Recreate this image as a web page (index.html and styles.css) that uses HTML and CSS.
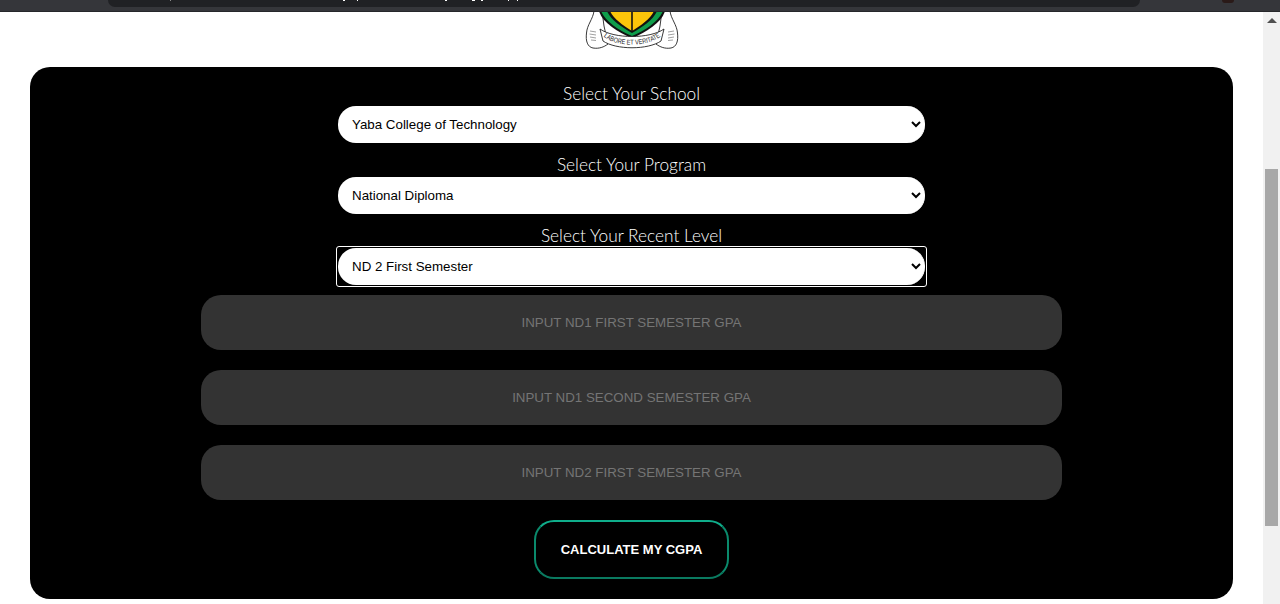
FILE: index.html
```html
<!DOCTYPE html>
<html lang="en">
<head>
<meta charset="utf-8">
<title>CGPA Calculator</title>
<link rel="stylesheet" href="styles.css">
</head>
<body>
<header class="chrome">
  <div class="omnibox"></div>
  <div class="avatar"></div>
</header>
<div class="viewport">
  <main class="page">
    <div class="crest-wrap">
      <svg class="crest" width="100" height="55" viewBox="0 0 100 55" aria-hidden="true">
        <path d="M12 -1 C11 7 5 13 4.500 21 C3.500 29 5.500 35 11 36 C17 37 22 35 26 32 L22 14 L20 -1 Z" fill="#fff" stroke="#222" stroke-width=".9"/>
        <path d="M88 -1 C89 7 95 13 95.500 21 C96.500 29 94.500 35 89 36 C83 37 78 35 74 32 L78 14 L80 -1 Z" fill="#fff" stroke="#222" stroke-width=".9"/>
        <path d="M8 19 L14 20 M7.500 22 L14 23 M8 25 L14 26 M9 28 L14 28.500 M92 19 L86 20 M92.500 22 L86 23 M92 25 L86 26 M91 28 L86 28.500" stroke="#777" stroke-width=".7"/>
        <path d="M17 -1 H83 C80 10 65 20 50 26 C35 20 20 10 17 -1 Z" fill="#111"/>
        <path d="M19 -1 H81 C77 9 64 18 50 24 C36 18 23 9 19 -1 Z" fill="#0f9d4b"/>
        <path d="M25 -1 H75 C72 7 61 15 50 21 C39 15 28 7 25 -1 Z" fill="#111"/>
        <path d="M28 -1 H72 C69 6 60 13 50 19 C40 13 31 6 28 -1 Z" fill="#fcc50a"/>
        <path d="M49.200 -1 H50.800 V20 H49.200 Z" fill="#111"/>
        <path d="M18 17 C32 27 68 27 82 17 L79 29 C66 38 34 38 21 29 Z" fill="#fff" stroke="#222" stroke-width=".9"/>
        <path id="motto" d="M21 24 C34 35.500 66 35.500 79 24" fill="none"/>
        <text class="motto" textLength="60" lengthAdjust="spacingAndGlyphs"><textPath href="#motto" startOffset="50%" text-anchor="middle">LABORE ET VERITATE</textPath></text>
      </svg>
    </div>
    <section class="card">
      <form class="form">
        <div class="field">
          <label class="field-label" for="school">Select Your School</label>
          <select class="picker" id="school"><option>Yaba College of Technology</option></select>
        </div>
        <div class="field">
          <label class="field-label" for="program">Select Your Program</label>
          <select class="picker" id="program"><option>National Diploma</option></select>
        </div>
        <div class="field">
          <label class="field-label" for="level">Select Your Recent Level</label>
          <div class="focus-ring">
            <select class="picker" id="level"><option>ND 2 First Semester</option></select>
          </div>
        </div>
        <div class="inputs">
          <input class="gpa" type="text" placeholder="INPUT ND1 FIRST SEMESTER GPA">
          <input class="gpa" type="text" placeholder="INPUT ND1 SECOND SEMESTER GPA">
          <input class="gpa" type="text" placeholder="INPUT ND2 FIRST SEMESTER GPA">
        </div>
        <button class="calc" type="button">CALCULATE MY CGPA</button>
      </form>
    </section>
  </main>
  <aside class="scrollbar">
    <div class="arrow"></div>
    <div class="thumb"></div>
  </aside>
</div>
</body>
</html>
```
FILE: styles.css
```css
* { box-sizing: border-box; }
html, body { height: 100%; margin: 0; }
body {
  overflow: hidden;
  display: flex;
  flex-direction: column;
  background: #fff;
  font-family: "Liberation Sans", Arial, sans-serif;
}
.chrome {
  flex: 0 0 12px;
  display: flex;
  padding-left: 108px;
  background: #35363a;
  border-bottom: 1px solid #26272a;
}
.omnibox {
  width: 1032px;
  height: 7px;
  border-radius: 0 0 10px 10px;
  background-color: #202124;
  background-image:
    linear-gradient(#8a8a8a, #8a8a8a), linear-gradient(#fff, #fff), linear-gradient(#fff, #fff),
    linear-gradient(#fff, #fff), linear-gradient(#fff, #fff), linear-gradient(#fff, #fff),
    linear-gradient(#fff, #fff), linear-gradient(#fff, #fff);
  background-size: 1px 1px, 2px 1px, 1px 1px, 2px 1px, 3px 1px, 2px 1px, 1px 1px, 1px 1px;
  background-position: 62px 0, 235px 0, 249px 0, 337px 0, 364px 0, 373px 0, 400px 0, 409px 0;
  background-repeat: no-repeat;
}
.avatar {
  width: 12px;
  height: 3px;
  margin-left: 82px;
  background: #2a1a18;
  border-radius: 0 0 6px 6px;
}
.viewport { flex: 1; display: flex; min-height: 0; }
.page { flex: 1; min-width: 0; padding: 0 30px; }
.crest-wrap {
  height: 55px;
  display: flex;
  justify-content: center;
  align-items: flex-start;
  overflow: hidden;
}
.crest { display: block; flex: none; margin-left: 1px; }
.motto { font-family: "Liberation Sans", Arial, sans-serif; font-size: 7px; fill: #222; }
.card {
  height: 532px;
  background: #000;
  border-radius: 20px;
  padding-top: 16px;
}
.form { display: flex; flex-direction: column; align-items: center; }
.field { display: flex; flex-direction: column; align-items: center; margin-bottom: 11px; }
.field:nth-child(3) { margin-bottom: 10px; }
.field-label {
  margin-bottom: 2px;
  font-family: Lato, sans-serif;
  font-weight: 300;
  font-size: 17.300px;
  line-height: 21px;
  color: #fff;
}
.picker {
  display: block;
  width: 587px;
  height: 37px;
  padding: 0 10px;
  border: 0;
  border-right: 1px solid #fff;
  border-radius: 18px;
  background: #fff;
  color: #000;
  font-family: "Liberation Sans", Arial, sans-serif;
  font-size: 13.333px;
}
.focus-ring {
  margin: -2px 0;
  padding: 1px;
  border: 1px solid #fff;
  border-radius: 3px;
}
.inputs { display: flex; flex-direction: column; gap: 20px; }
.gpa {
  display: block;
  width: 861px;
  height: 55px;
  padding: 0 0 1px;
  border: 0;
  border-radius: 20px;
  background: #333;
  color: #fff;
  text-align: center;
  font-family: "Liberation Sans", Arial, sans-serif;
  font-size: 13.333px;
}
.gpa::placeholder { color: #757575; opacity: 1; }
.calc {
  width: 195px;
  height: 59px;
  margin-top: 20px;
  padding: 0;
  border: 2px solid #0a8a6c;
  border-top-color: #0fae8b;
  border-bottom-color: #0a7a60;
  border-radius: 20px;
  background: #000;
  color: #fff;
  font-family: "Liberation Sans", Arial, sans-serif;
  font-size: 13px;
  font-weight: 700;
}
.scrollbar {
  flex: 0 0 17px;
  position: relative;
  background: #f1f1f1;
}
.arrow {
  width: 0;
  height: 0;
  margin: 6px auto 0;
  border: 5px solid transparent;
  border-top: 0;
  border-bottom-color: #505050;
}
.thumb {
  position: absolute;
  left: 2px;
  top: 157px;
  width: 13px;
  height: 357px;
  background: #a8a8a8;
}
```
